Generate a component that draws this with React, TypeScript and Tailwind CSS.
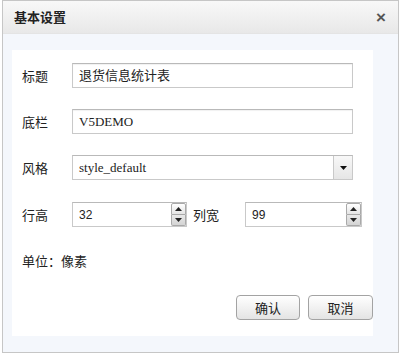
import React from "react";

function Spinner() {
  return (
    <div className="absolute right-0 top-0 flex h-full w-[15px] flex-col">
      <div className="flex h-1/2 items-center justify-center rounded-t-[2px] border border-[#a9a9a9] bg-gradient-to-b from-[#ffffff] to-[#e4e4e4]">
        <svg width="7" height="4" viewBox="0 0 7 4"><path d="M0 4 L3.5 0 L7 4 Z" fill="#222" /></svg>
      </div>
      <div className="flex h-1/2 items-center justify-center rounded-b-[2px] border border-t-0 border-[#a9a9a9] bg-gradient-to-b from-[#e8e8e8] to-[#d4d4d4]">
        <svg width="7" height="4" viewBox="0 0 7 4"><path d="M0 0 L7 0 L3.5 4 Z" fill="#222" /></svg>
      </div>
    </div>
  );
}

export default function App() {
  return (
    <div className="h-[355px] w-[401px] bg-white font-['Noto_Sans_CJK_SC','Noto_Sans',sans-serif]">
      <div className="ml-[2px] flex h-[353px] w-[397px] flex-col border border-[#c6c6c6] bg-[#f4f7fc]">
        <div className="flex h-[33px] items-center justify-between border-b border-[#e4e4e4] bg-gradient-to-b from-[#f8f8f8] to-[#e8e8e8] px-[11px]">
          <span className="text-[13px] font-bold text-[#222]">基本设置</span>
          <span className="pr-[1px] font-['Liberation_Sans',sans-serif] text-[17px] font-bold leading-none text-[#555]">×</span>
        </div>
        <div className="ml-[9px] mt-[16px] flex h-[286px] w-[361px] flex-col bg-white pl-[10px] text-[13px] text-[#222]">
          <div className="mt-[13px] flex items-center">
            <span className="w-[50px]">标题</span>
            <div className="flex h-[25px] w-[281px] items-center border border-[#c9c9c9] border-t-[#b9b9b9] pl-[6px] font-['Liberation_Serif','Noto_Sans_CJK_SC',serif] shadow-[inset_0_1px_1px_rgba(0,0,0,0.06)]">
              退货信息统计表
            </div>
          </div>
          <div className="mt-[21px] flex items-center">
            <span className="w-[50px]">底栏</span>
            <div className="flex h-[25px] w-[281px] items-center border border-[#c9c9c9] border-t-[#b9b9b9] pl-[6px] font-['Liberation_Serif','Noto_Sans_CJK_SC',serif] shadow-[inset_0_1px_1px_rgba(0,0,0,0.06)]">
              V5DEMO
            </div>
          </div>
          <div className="mt-[21px] flex items-center">
            <span className="w-[50px]">风格</span>
            <div className="flex h-[25px] w-[281px] items-stretch border border-[#c9c9c9] border-t-[#b9b9b9]">
              <div className="flex flex-1 items-center pl-[6px] font-['Liberation_Serif',serif]">style_default</div>
              <div className="flex w-[19px] items-center justify-center border-l border-[#c9c9c9] bg-gradient-to-b from-[#f8f8f8] to-[#e6e6e6]">
                <svg width="7" height="4" viewBox="0 0 7 4"><path d="M0 0 L7 0 L3.5 4 Z" fill="#111" /></svg>
              </div>
            </div>
          </div>
          <div className="mt-[22px] flex items-center">
            <span className="w-[50px]">行高</span>
            <div className="relative flex h-[25px] w-[115px] items-center border border-[#c9c9c9] border-t-[#b9b9b9] pl-[6px] font-['Liberation_Sans',sans-serif] text-[12px]">
              32
              <Spinner />
            </div>
            <span className="ml-[6px] w-[52px]">列宽</span>
            <div className="relative flex h-[25px] w-[117px] items-center border border-[#c9c9c9] border-t-[#b9b9b9] pl-[6px] font-['Liberation_Sans',sans-serif] text-[12px]">
              99
              <Spinner />
            </div>
          </div>
          <div className="mt-[24px] leading-[20px]">单位：像素</div>
          <div className="mt-[24px] flex justify-end gap-[8px]">
            <button className="flex h-[25px] w-[64px] items-center justify-center rounded-[4px] border border-[#a3a3a3] bg-gradient-to-b from-[#ffffff] to-[#e4e4e4] text-[13px] text-[#222]">确认</button>
            <button className="flex h-[25px] w-[65px] items-center justify-center rounded-[4px] border border-[#a3a3a3] bg-gradient-to-b from-[#ffffff] to-[#e4e4e4] text-[13px] text-[#222]">取消</button>
          </div>
        </div>
      </div>
    </div>
  );
}
